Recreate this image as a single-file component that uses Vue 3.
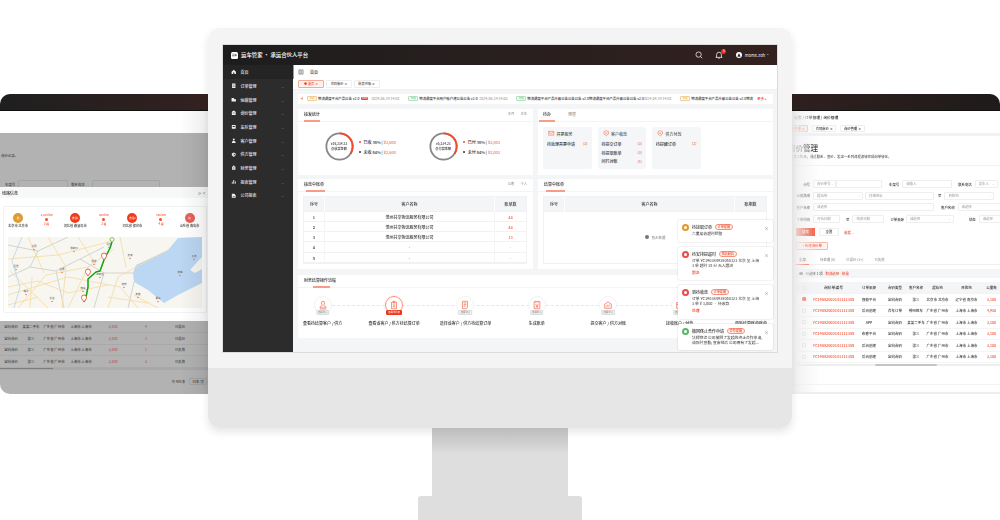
<script setup>
const menu = [
  { t: '首页', d: 'M1 5 5 1.5 9 5V9H6V6.500H4V9H1Z', on: true },
  { t: '订单管理', d: 'M2 1H8V9H2ZM3.500 3V4H6.500V3ZM3.500 5.500V6.500H6.500V5.500Z' },
  { t: '运输管理', d: 'M1 2H5L6.500 4H9V8H1Z' },
  { t: '询价管理', d: 'M1.500 3 5 1 8.500 3V9H1.500ZM3 5V6H7V5Z' },
  { t: '车队管理', d: 'M1.500 2H8.500V8.500H1.500ZM3 3.500V5.500H7V3.500Z' },
  { t: '客户管理', d: 'M5 1A1.800 1.800 0 1 1 5 4.600 1.800 1.800 0 1 1 5 1ZM1.500 9C1.500 6.500 3 5.500 5 5.500S8.500 6.500 8.500 9Z' },
  { t: '供方管理', d: 'M5 1 8.500 2.500V6L5 9 1.500 6V2.500ZM5 3V7L7 5.500V3.500Z' },
  { t: '财务管理', d: 'M2 2.500H8V8.500H2ZM4 1H6V2.500H4ZM4 4.500V6.500H6V4.500Z' },
  { t: '报表管理', d: 'M1.500 8.500V5H3V8.500ZM4.200 8.500V2H5.800V8.500ZM7 8.500V4H8.500V8.500Z' },
  { t: '公司报表', d: 'M1.500 1.500H6L8.500 4V8.500H1.500ZM3 5.500V6.500H7V5.500Z' },
]
const tableRows = [
  { n: 1, c: '沧州共享物流服务有限公司', v: '44' },
  { n: 2, c: '沧州共享物流服务有限公司', v: '44' },
  { n: 3, c: '沧州共享物流服务有限公司', v: '13' },
  { n: 4, c: '-', v: '-' },
  { n: 5, c: '-', v: '-' },
]
const todos = [
  { t: '开票服务', rows: [['待处理开票申请', '(3)']] },
  { t: '客户收款', rows: [['待提交订单', '(3)'], ['待提现账单', '(3)'], ['间行对账', '(1)']] },
  { t: '供方付款', rows: [['待提醒订单', '(2)']] },
]
const steps = [
  { t: '查看待结算客户 / 供方', b: '结算中心', d: 'M6 1.500A2 2 0 0 1 8 3.500C8 5 7 5.500 7 6.500L9.500 8V9.500H2.500V8L5 6.500C5 5.500 4 5 4 3.500A2 2 0 0 1 6 1.500ZM2 10.800H10' },
  { t: '查看该客户 / 供方待结算订单', b: '结算单列表', active: true, d: 'M3 2.500H9V10.500H3ZM5 1.500H7V3.500H5ZM4.500 6H7.500M4.500 8H7.500' },
  { t: '选择该客户 / 供方待结算订单', b: '结算中心', d: 'M3 1.500H9V9L7.500 10.500H3ZM4.500 3.500H7.500M4.500 5.500H7.500M4.500 7.500H6.500' },
  { t: '生成账单', b: '结算中心', d: 'M2.500 2H9.500V10.500H2.500ZM4.500 1V3M7.500 1V3M4.500 5 6 7 7.500 5M6 7V9.500M4.500 7.500H7.500' },
  { t: '提交客户 / 供方对账', b: '结算中心', d: 'M2 10V5L6 2 10 5V10ZM4 8.500 5.500 6.500 6.500 7.500 8 5.500' },
  { t: '接收账户 / 付款', b: '结算中心', d: 'M2 3H10V10H2ZM2 5.500H10M7 7.500H8.500' },
  { t: '更新结算账单账单', b: '', d: 'M3 1.500H9V10.500H3ZM4.500 4H7.500M4.500 6H7.500' },
]
const notices = [
  { t: '待接取订单', tag: '订单提醒', c: '#e5962a', s: '六里接收超时预警', h: 22, m: 0 },
  { t: '待安排提超时', tag: '预约履约', c: '#ee4a4a', s: '订单 YC190384938050123 北京 至 上海\n3 单 超时 15 分 无人跟进', a: '跟进', h: 33, m: 5 },
  { t: '到待收款', tag: '订单提醒', c: '#ee4a4a', s: '订单 YC190384938050123 北京 至 上海\n3 单 ¥ 3,000 · 待收款', a: '处理', h: 34, m: 5 },
  { t: '撤回终止合作申请', tag: '合作提醒', c: '#58b868', s: '法师物流 公司撤回了发起的终止合作申请,\n请及时查看; 查审批后 公司拥有了发起...', h: 26, m: 5 },
]
const stops = [
  { c: '#e09a33', i: '起', t: '北京市 北京市' },
  { km: '1,200 km', d: '2 程' },
  { c: '#f03b1c', i: '途经1', t: '河北省 秦皇岛市' },
  { km: '800 km', d: '2 程' },
  { c: '#f03b1c', i: '途经2', t: '河北省 保定市' },
  { km: '500 km', d: '4 程' },
  { c: '#e8605a', i: '终', t: '山东省 青岛市' },
]
const leftRows = [
  ['定向询价', '某某二手车', '广东省 广州市', '上海市 上海市', '3,100', '4', '已报价'],
  ['定向询价', '张三', '广东省 广州市', '上海市 上海市', '3,100', '2', '已报价'],
  ['定向询价', '张三', '广东省 广州市', '上海市 上海市', '3,100', '1', '已失效'],
  ['定向询价', '张三', '广东省 广州市', '上海市 上海市', '3,100', '3', '已失效'],
]
const rightRows = [
  ['智能平台', '定向询价', '张三', '北京市 北京市', '辽宁省 南京市', '3,100', true],
  ['后台创建', '合车订单', '神州租车', '广东省 广州市', '上海市 上海市', '4,950'],
  ['APP', '定向询价', '某某二手车', '广东省 广州市', '上海市 上海市', '3,100'],
  ['布客平台', '定向询价', '张三', '广东省 广州市', '上海市 上海市', '3,100'],
  ['后台创建', '定向询价', '张三', '广东省 广州市', '上海市 上海市', '3,100'],
  ['后台创建', '定向询价', '张三', '广东省 广州市', '上海市 上海市', '3,100'],
]
const cities = [
  [101, 8, '北京'], [122, 19, '天津'], [86, 25, '保定'], [54, 33, '太原'], [92, 38, '石家庄'],
  [75, 52, '邢台'], [116, 48, '济南'], [150, 62, '青岛'], [26, 10, '大同'], [172, 36, '渤海'],
  [18, 55, '临汾'], [130, 58, '泰安'], [186, 20, '大连'], [44, 62, '长治'], [66, 12, '张家口'], [8, 30, '吕梁'],
]
const pins = [[96, 23], [80, 39], [76, 65]]
</script>

<template>
  <div class="page">
    <section class="win win-left">
      <div class="win-head"></div>
      <div class="win-white"></div>
      <div class="mask">
        <p class="mask-note">询价记录。</p>
        <div class="mask-form"><span>车架号</span><i class="mask-in"></i><span>联系电话</span><i class="mask-in wide"></i></div>
        <div class="modal">
          <div class="modal-head"><span>线路信息</span><span class="modal-tools">⟳ ×</span></div>
          <div class="modal-card">
            <div class="stops">
              <template v-for="(s, i) in stops" :key="i">
                <div v-if="s.km" class="leg">
                  <span>{{ s.km }}</span><i></i><span>{{ s.d }}</span>
                </div>
                <div v-else class="stop">
                  <b :style="{ background: s.c }">{{ s.i }}</b>
                  <span>{{ s.t }}</span>
                </div>
              </template>
            </div>
            <svg class="map" viewBox="0 0 194 71" preserveAspectRatio="none">
              <rect width="194" height="71" fill="#f8f6f0" />
              <path d="M125 36 128 28 143 21 160 13 170 1 194 0V46L180 53 170 58 156 66 140 53 126 45Z" fill="#bcd7f3" />
              <path d="M182 33 194 20V32L187 36Z" fill="#f8f6f0" />
              <path d="M0 8 30 14 60 0M0 40 22 30 48 34 72 22 96 10M30 14 22 30M48 34 56 71M72 22 96 36 125 36M96 36 86 71M120 71 126 45" fill="none" stroke="#c4c4bf" stroke-width=".7" />
              <path d="M0 22 50 18 104 4M10 71 38 38 80 30 106 12M60 71 80 30M100 71 110 40 160 13M130 71 112 50 60 40 0 58M2 34 40 71M150 71 126 58M20 0 36 36M0 50 30 44 60 56 100 48M40 0 58 30 54 71M70 0 88 28M112 0 118 30M100 60 140 66M0 68 30 60M22 71 24 40" fill="none" stroke="#f5dca0" stroke-width=".8" />
              <path d="M14 0 4 24 12 50 6 71" fill="none" stroke="#b8d4ee" stroke-width=".8" />
              <path d="M104 5 102 11 96 23 92 34 88 35 80 42 80 50 78 60 76 65" fill="none" stroke="#0da30d" stroke-width="1.500" stroke-linejoin="round" />
              <g v-for="c in cities" :key="c[2]">
                <circle :cx="c[0]" :cy="c[1] + 2.500" r=".7" fill="#e4634f" />
                <text :x="c[0]" :y="c[1]" class="city">{{ c[2] }}</text>
              </g>
              <path v-for="(p, i) in pins" :key="i" :d="`M${p[0]} ${p[1]}c-1.600-2.400-2.500-3.200-2.500-4.500a2.500 2.500 0 0 1 5 0c0 1.300-.9 2.100-2.500 4.500Z`" fill="#fff" stroke="#e8503f" stroke-width=".9" />
              <circle cx="104" cy="2.500" r="2" fill="#fff" stroke="#7cb342" stroke-width=".9" />
            </svg>
          </div>
        </div>
        <div class="left-rows">
          <div v-for="(r, i) in leftRows" :key="i" class="left-row">
            <span v-for="(c, j) in r" :key="j" :class="{ dim: j === 4 || j === 5 }">{{ c }}</span>
          </div>
        </div>
        <div class="left-scroll"><i></i></div>
        <div class="left-pager"><span>共 400 条</span><em>10条/页</em></div>
      </div>
    </section>

    <section class="win win-right">
      <div class="win-head"></div>
      <div class="crumb">首页 / 订单管理 / 询价管理</div>
      <div class="r-tags">
        <span class="r-tag on">询价管理 ×</span><span class="r-tag">合同审价 ×</span><span class="r-tag">询价管理 ×</span>
      </div>
      <h2 class="r-title">询价管理</h2>
      <p class="r-sub">理工作台，通过联系、查价、发送一系列流程流转完成询单转化。</p>
      <div class="r-form">
        <div class="f-row"><label>询号</label><i class="in sel w23">询价单号</i><i class="in w46"></i><label class="ml">车架号</label><i class="in w50">请输入</i><label class="ml2">联系电话</label><i class="in sel w23">发车人</i></div>
        <div class="f-row"><label>运输路线</label><i class="in sel w50">起始地</i><i class="in w69">详细地址</i><label class="sm">至</label><i class="in sel w50">目的地</i></div>
        <div class="f-row"><label>客户名称</label><i class="in w121">请选择</i><label class="ml">客户名称</label><i class="in w50">请选择</i></div>
        <div class="f-row"><label>下单时间</label><i class="in w27">开始日期</i><label class="sm2">至</label><i class="in w32">结束日期</i><label class="ml3">订单来源</label><i class="in sel w48">请选择</i><label class="ml4">状态</label><i class="in w27">请选择</i></div>
      </div>
      <div class="r-btns"><b>搜索</b><span>重置</span><em>收起 ⌄</em></div>
      <div class="r-new">+ 新建询价单</div>
      <div class="r-tabs"><span class="on">全部</span><span>待处理 (6)</span><span>已报价 (3+)</span><span>已失效</span></div>
      <div class="r-alert"><i></i><span>已选择 1 项</span><em>取消选择</em><em>批量</em></div>
      <div class="r-table">
        <div class="r-tr th"><span class="ck"><i></i></span><span class="no">询价单编号</span><span>订单来源</span><span>询价类型</span><span>客户名称</span><span>起始地</span><span>目的地</span><span>公里数</span></div>
        <div v-for="(r, i) in rightRows" :key="i" class="r-tr">
          <span class="ck"><i :class="{ checked: r[6] }"></i></span>
          <span class="no red">YC19042000141112345</span>
          <span>{{ r[0] }}</span><span>{{ r[1] }}</span><span>{{ r[2] }}</span><span>{{ r[3] }}</span><span>{{ r[4] }}</span><span class="red">{{ r[5] }}</span>
        </div>
      </div>
      <div class="r-scroll"><i></i></div>
      <div class="r-foot"></div>
    </section>

    <div class="desk">
      <div class="monitor">
        <div class="bezel">
          <div class="screen">
            <header class="top">
              <span class="logo">运车</span>
              <h1>运车管家 · 承运合伙人平台</h1>
              <div class="top-right">
                <svg class="top-ic" viewBox="0 0 10 10"><circle cx="4.500" cy="4.500" r="3.300" /><path d="M7 7 9 9" /></svg>
                <span class="bell">
                  <svg class="top-ic" viewBox="0 0 10 10"><path d="M2 7.500V4.500A3 3 0 0 1 8 4.500V7.500L9 8H1ZM4 9H6" /></svg>
                  <b>5</b>
                </span>
                <span class="avatar"><svg viewBox="0 0 10 10"><circle cx="5" cy="5" r="5" fill="#fff" /><path d="M2.500 8C3 5.500 4 3 5 2.500 6 3 7 5.500 7.500 8Z" fill="#333" /></svg></span>
                <span class="user">mome.zoh ⌃</span>
              </div>
            </header>
            <div class="body">
              <aside class="side">
                <div v-for="m in menu" :key="m.t" class="menu" :class="{ on: m.on }">
                  <svg viewBox="0 0 10 10"><path :d="m.d" fill="#eee" fill-rule="evenodd" /></svg>
                  <span>{{ m.t }}</span>
                  <em v-if="!m.on">⌄</em>
                </div>
              </aside>
              <main class="main">
                <div class="nav">
                  <svg viewBox="0 0 10 10"><path d="M1.500 1.500H8.500V8.500H1.500ZM3.500 1.500V8.500M5 3.500H7M5 5H7M5 6.500H7" fill="none" stroke="#444" stroke-width=".8" /></svg>
                  <span>首页</span>
                </div>
                <div class="tabs">
                  <span class="tag on">● 首页 ×</span><span class="tag">合同审价 ×</span><span class="tag">财务对账 ×</span>
                </div>
                <div class="content">
                  <div class="ticker">
                    <svg viewBox="0 0 10 10"><path d="M1 4H3L6 2V8L3 6H1Z" fill="#f09a8c" /></svg>
                    <em class="pill y">平台</em><span class="s1">物流调度平台产品公告 v2.0</span><b>NEW</b><time>2024-06-14 14:01</time>
                    <em class="pill g">平台</em><span class="s2">物流调度平台用户账户建公告公告 v2.0</span><time>2024-06-14 14:03</time>
                    <em class="pill g">平台</em><span class="s3">物流调度平台产品升级公告公告公告 v2.0物流调度平台产品升级公告公告 v2.0</span><time>2024-04-14 14:01</time>
                    <em class="pill y">平台</em><span class="s4">物流调度平台产品升级公告公告 v2.0物流</span><a>更多 ▸</a>
                  </div>
                  <div class="two r1">
                    <section class="card">
                      <div class="card-head"><span class="ttl">核发统计</span><div class="ops"><span>本月</span><span>本年</span></div></div>
                      <div class="donuts">
                        <div class="donut-item">
                          <div class="donut">
                            <svg viewBox="0 0 32 32"><circle cx="16" cy="16" r="14.500" fill="none" stroke="#888" stroke-width="2" /><circle cx="16" cy="16" r="14.500" fill="none" stroke="#f4492a" stroke-width="2" stroke-dasharray="31 91" transform="rotate(-90 16 16)" /></svg>
                            <div class="donut-t"><span>¥16,234.23</span><span>总收款金额</span></div>
                          </div>
                          <ul class="legend"><li><i class="r"></i>已收 36% | <b>¥2,600</b></li><li><i></i>未收 64% | <b>¥2,600</b></li></ul>
                        </div>
                        <div class="donut-item">
                          <div class="donut">
                            <svg viewBox="0 0 32 32"><circle cx="16" cy="16" r="14.500" fill="none" stroke="#888" stroke-width="2" /><circle cx="16" cy="16" r="14.500" fill="none" stroke="#f4492a" stroke-width="2" stroke-dasharray="31 91" transform="rotate(-90 16 16)" /></svg>
                            <div class="donut-t"><span>¥5,234.23</span><span>总付款金额</span></div>
                          </div>
                          <ul class="legend"><li><i class="r"></i>已付 36% | <b>¥2,001</b></li><li><i></i>未付 64% | <b>¥2,001</b></li></ul>
                        </div>
                      </div>
                    </section>
                    <section class="card">
                      <div class="card-head"><span class="ttl t2">待办</span><span class="tab2">预警</span></div>
                      <div class="todo-row">
                        <div v-for="(b, bi) in todos" :key="b.t" class="todo">
                          <div class="todo-t">
                            <svg viewBox="0 0 10 10"><path v-if="bi === 0" d="M1 2H9V8H1ZM1 2.500 5 5.500 9 2.500" /><path v-else d="M5 1 8.500 2.500V6L5 9 1.500 6V2.500ZM3.500 5H6.500" /></svg>
                            <span>{{ b.t }}</span>
                          </div>
                          <div v-for="r in b.rows" :key="r[0]" class="todo-r"><span>{{ r[0] }}</span><em>{{ r[1] }}</em></div>
                        </div>
                      </div>
                    </section>
                  </div>
                  <div class="two r2">
                    <section class="card">
                      <div class="card-head"><span class="ttl t3">核款中账单</span><div class="ops"><span>公客</span><span>个人</span></div></div>
                      <div class="tbl">
                        <div class="tr th"><span>序号</span><span>客户名称</span><span>账单数</span></div>
                        <div v-for="r in tableRows" :key="r.n" class="tr"><span>{{ r.n }}</span><span>{{ r.c }}</span><span class="red">{{ r.v }}</span></div>
                      </div>
                    </section>
                    <section class="card">
                      <div class="card-head"><span class="ttl t3">结算中账单</span></div>
                      <div class="tbl">
                        <div class="tr th"><span>序号</span><span>客户名称</span><span>账期数</span></div>
                        <div class="empty"><i></i>暂无数据</div>
                      </div>
                    </section>
                  </div>
                  <section class="card r3">
                    <div class="card-head"><span class="ttl t4">财务结算操作流程</span></div>
                    <div class="flow">
                      <div v-for="(s, i) in steps" :key="i" class="step" :class="{ active: s.active }">
                        <div class="circle">
                          <svg viewBox="0 0 12 12"><path :d="s.d" /></svg>
                          <b v-if="s.b">{{ s.b }}</b>
                        </div>
                        <span>{{ s.t }}</span>
                      </div>
                    </div>
                  </section>
                </div>
              </main>
            </div>
            <div class="toasts">
              <div v-for="n in notices" :key="n.t" class="toast" :style="{ height: n.h + 'px', marginTop: n.m + 'px' }">
                <i class="dot" :style="{ borderColor: n.c }"></i>
                <div class="toast-b">
                  <div class="toast-t"><strong>{{ n.t }}</strong><em>{{ n.tag }}</em><u>×</u></div>
                  <p>{{ n.s }}</p>
                  <a v-if="n.a">{{ n.a }}</a>
                </div>
              </div>
            </div>
          </div>
        </div>
        <div class="chin"></div>
      </div>
      <div class="neck"></div>
      <div class="base"></div>
    </div>
  </div>
</template>

<style>
html, body { margin: 0; background: #fff; }
</style>

<style scoped>
* { box-sizing: border-box; }
.page { position: relative; width: 1000px; height: 520px; overflow: hidden; background: #fff; font-family: "Noto Sans CJK SC", "Liberation Sans", sans-serif; font-size: 4px; font-weight: 500; color: #333; }
i, em, u { font-style: normal; text-decoration: none; }
p, h1, h2, ul { margin: 0; padding: 0; list-style: none; }
.red { color: #f4694e; }

/* stacked windows */
.win { position: absolute; top: 94px; width: 208px; height: 300px; background: #fff; overflow: hidden; filter: blur(.25px); }
.win-left { left: 0; border-radius: 10px 0 0 10px; }
.win-right { left: 792px; border-radius: 0 10px 0 0; }
.win-left::after { content: ""; position: absolute; inset: 17px 0 0 180px; background: linear-gradient(90deg, rgba(0,0,0,0), rgba(0,0,0,.07)); pointer-events: none; z-index: 2; }
.win-right::after { content: ""; position: absolute; inset: 17px 180px 0 0; background: linear-gradient(90deg, rgba(238,238,238,.95), rgba(246,246,246,0)); pointer-events: none; }
.win-head { height: 17px; background: linear-gradient(90deg, #1f1f1f, #33211f); border-bottom: 1px solid #111; }
.win-right .win-head { background: linear-gradient(90deg, #2f201e, #1e1b1a); }
.win-white { height: 22px; }
.mask { position: relative; height: 261px; background: #b2b2b2; color: #444; font-size: 3.400px; }
.mask-note { padding: 21px 0 0 1px; line-height: 4px; }
.mask-form { display: flex; align-items: center; gap: 3px; height: 8px; margin-top: 22px; padding: 0 0 0 5px; }
.mask-in { width: 50px; height: 8px; border: 1px solid #a4a4a4; border-radius: 1px; }
.mask-in.wide { width: 68px; margin-left: 4px; }
.modal { position: absolute; left: 0; right: 0; top: 54px; height: 134px; background: #fff; color: #333; z-index: 1; }
.modal-head { display: flex; justify-content: space-between; align-items: center; height: 11px; padding: 0 2px; background: #f7f8f8; font-size: 4px; }
.modal-tools { color: #888; }
.modal-card { margin: 8px 1px 0 3px; padding: 3px 4px; height: 107px; border: 1px solid #f2f3f4; border-radius: 2px; }
.stops { display: grid; grid-template-columns: repeat(7, 28.600px); margin: 0 -4.300px; height: 27px; padding-top: 3px; justify-items: center; }
.stop { display: flex; flex-direction: column; align-items: center; gap: 1px; font-size: 3.200px; line-height: 4px; white-space: nowrap; }
.stop b { display: flex; align-items: center; justify-content: center; width: 10px; height: 10px; border-radius: 50%; color: #fff; font-weight: 400; font-size: 2.600px; }
.leg { display: flex; flex-direction: column; align-items: center; gap: 1px; color: #f4492a; font-size: 2.800px; line-height: 4px; white-space: nowrap; }
.leg i { width: 3px; height: 3px; border-radius: 50%; background: #f4492a; }
.map { display: block; width: 100%; height: 71px; }
.city { font-size: 2.500px; fill: #666; text-anchor: middle; }
.left-rows { margin-top: 133.500px; }
.left-row { display: grid; grid-template-columns: 22px 18px 28px 26px 38px 28px 40px; justify-items: center; align-items: center; height: 11.500px; border-bottom: 1px solid #a9a9a9; font-size: 3.400px; white-space: nowrap; }
.left-row .dim { color: #b0564a; }
.left-scroll { height: 2px; margin-top: .5px; background: #a8a8a8; }
.left-scroll i { display: block; width: 53px; height: 1px; background: #7d7d7d; }
.left-pager { display: flex; justify-content: flex-end; gap: 4px; align-items: center; height: 7px; margin-top: 8px; padding-right: 1px; font-size: 3.300px; white-space: nowrap; }
.left-pager em { padding: 0 2px; border: 1px solid #a4a4a4; border-radius: 1px; }

.crumb { height: 11px; padding: 4px 0 0 2px; color: #333; font-size: 3.800px; line-height: 5px; white-space: nowrap; }
.r-tags { display: flex; gap: 4px; height: 13px; margin-top: 1px; padding: 1.500px 0 0; border-bottom: 3px solid #f0f2f5; }
.r-tag { height: 7px; padding: 0 2.500px; border: 1px solid #eee; border-radius: 1px; font-size: 3.300px; line-height: 5px; white-space: nowrap; }
.r-tag.on { margin-left: -8px; color: #f4492a; border-color: #f8b7a7; background: #fff1ed; }
.r-title { margin: 6px 0 0 -4px; height: 11px; font-weight: 500; font-size: 7.500px; line-height: 11px; white-space: nowrap; color: #222; }
.r-sub { margin-top: .5px; font-size: 3.400px; line-height: 5px; color: #555; white-space: nowrap; border-bottom: 1px solid #f3f3f3; padding: 0 0 6px 1px; }
.r-form { margin-top: 14.500px; display: flex; flex-direction: column; gap: 3.700px; }
.f-row { display: flex; align-items: center; height: 8px; font-size: 3.400px; white-space: nowrap; }
.f-row label { width: 21px; padding-right: 3px; text-align: right; color: #333; flex: none; }
.f-row label.ml, .f-row label.ml2, .f-row label.ml3, .f-row label.ml4, .f-row label.sm, .f-row label.sm2 { width: auto; padding: 0; }
.f-row label.ml { margin: 0 3px 0 5px; }
.f-row label.ml2 { margin: 0 3px 0 4px; }
.f-row label.ml3 { margin: 0 2px 0 4px; }
.f-row label.ml4 { margin: 0 3px 0 13px; }
.f-row label.sm { margin: 0 3px 0 2px; }
.f-row label.sm2 { margin: 0 3px 0 4px; }
.in { position: relative; display: block; flex: none; height: 8px; padding-left: 3px; border: 1px solid #eee; border-radius: 1px; color: #aaa; line-height: 6px; margin-right: 2px; }
.in.sel::after { content: "⌄"; position: absolute; right: 1.500px; top: -.5px; color: #bbb; }
.w23 { width: 23px; margin-right: 0; } .w27 { width: 27px; } .w32 { width: 32px; } .w46 { width: 46px; } .w48 { width: 48px; } .w50 { width: 50px; } .w69 { width: 69px; } .w121 { width: 121px; }
.r-btns { display: flex; align-items: center; gap: 4px; margin: 5px 0 0 4px; height: 8px; font-size: 3.400px; }
.r-btns b { width: 19px; line-height: 8px; text-align: center; color: #fff; background: #f4492a; font-weight: 400; }
.r-btns span { width: 20px; line-height: 6px; text-align: center; border: 1px solid #eee; border-radius: 1px; }
.r-btns em { margin-left: 1px; color: #f4492a; }
.r-new { width: 32px; margin: 6px 0 0 4px; height: 8px; line-height: 6px; text-align: center; color: #f4492a; background: #fff5f2; border: 1px solid #f8b7a7; border-radius: 1px; font-size: 3.400px; white-space: nowrap; }
.r-tabs { display: flex; gap: 11px; margin-top: 5px; padding-left: 4px; height: 10px; border-bottom: 1px solid #f0f0f0; font-size: 3.400px; color: #999; line-height: 9px; white-space: nowrap; }
.r-tabs .on { width: 13px; height: 10px; text-align: center; color: #333; border-bottom: 1px solid #f4492a; }
.r-alert { display: flex; align-items: center; gap: 3px; margin: 4px 0 0 4px; padding-left: 3px; height: 9px; background: #f4f5f7; font-size: 3.400px; color: #666; white-space: nowrap; }
.r-alert i { width: 3.500px; height: 3.500px; border-radius: 50%; background: #666; }
.r-alert em { color: #f4492a; }
.r-table { margin: 4px 0 0 4px; width: 204px; }
.r-tr { display: grid; grid-template-columns: 16px 43px 28px 24px 18px 25px 33px 17px; height: 11.500px; align-items: center; justify-items: center; border-bottom: 1px solid #f4f4f4; font-size: 3.500px; white-space: nowrap; color: #333; }
.r-tr .red { color: #f4492a; }
.r-tr .no { font-size: 3.800px; }
.r-tr.th { height: 12px; background: #f4f5f7; }
.ck i { display: block; width: 4px; height: 4px; border: .5px solid #ddd; border-radius: 1px; background: #fff; }
.ck i.checked { background: #f4321a; border-color: #f4321a; }
.r-scroll { height: 2px; margin: 1px 0 0 4px; background: #eee; }
.r-scroll i { display: block; width: 62px; height: 2px; margin-left: 79px; background: #c4c4c4; border-radius: 1px; }
.r-foot { height: 10px; margin-top: 18px; border-top: 1px solid #f3f3f3; border-bottom: 2px solid #eee; }

/* monitor */
.desk { position: relative; display: flex; flex-direction: column; align-items: center; padding-top: 28px; }
.monitor { width: 584px; height: 400px; border-radius: 12px; overflow: hidden; box-shadow: 0 4px 9px rgba(0,0,0,.1); }
.bezel { height: 340px; padding: 17px 15px 0; background: #f4f4f4; }
.chin { height: 60px; background: #e6e6e6; }
.neck { width: 136px; height: 68px; background: linear-gradient(#bcbcbc, #dedede 26px); }
.base { width: 164px; height: 24px; background: #dedede; border-radius: 3px 3px 0 0; }
.screen { position: relative; display: flex; flex-direction: column; width: 554px; height: 307px; background: #f4f5f7; outline: 1.500px solid #dcdcdc; filter: blur(.25px); }

.top { display: flex; align-items: center; flex: none; height: 20px; padding: 0 8px; color: #fff; background: linear-gradient(90deg, #1d1d1d, #33211f); }
.logo { width: 7px; height: 7px; border-radius: 1.500px; background: #fff; color: #222; font-size: 2.400px; line-height: 7px; text-align: center; font-weight: 700; overflow: hidden; white-space: nowrap; }
.top h1 { margin-left: 3px; font-size: 5.400px; font-weight: 500; white-space: nowrap; }
.top-right { display: flex; align-items: center; margin-left: auto; }
.top-ic { display: block; width: 8px; height: 8px; fill: none; stroke: #fff; stroke-width: .9; }
.bell { position: relative; margin-left: 12px; }
.bell b { position: absolute; top: -2px; right: -3px; width: 5px; height: 5px; border-radius: 50%; background: #ee2b25; font-size: 3px; font-weight: 400; line-height: 5px; text-align: center; }
.avatar { width: 6px; height: 6px; margin: 0 2.500px 0 13px; }
.avatar svg { display: block; }
.user { font-size: 4px; color: #ddd; white-space: nowrap; }

.body { display: flex; flex: 1; min-height: 0; }
.side { flex: none; width: 70px; background: #2c2c2c; color: #e8e8e8; }
.menu { display: flex; align-items: center; height: 13.700px; padding: 0 9px 0 8px; font-size: 4px; white-space: nowrap; }
.menu.on { background: #242424; height: 14px; }
.menu svg { flex: none; width: 5.500px; height: 5.500px; margin-right: 4px; }
.menu em { margin-left: auto; color: #777; font-size: 4px; }

.main { flex: 1; min-width: 0; }
.nav { display: flex; align-items: center; height: 14px; padding-left: 4px; background: #fff; border-left: 1px solid #f4785f; font-size: 4px; color: #333; }
.nav svg { width: 6px; height: 6px; margin-right: 6px; }
.tabs { display: flex; gap: 2px; align-items: center; height: 11px; padding-left: 5px; background: #fff; border-bottom: 1px solid #f0f1f3; }
.tag { height: 7.500px; padding: 0 3.500px; border: 1px solid #eee; border-radius: 1px; font-size: 3.200px; line-height: 5.500px; white-space: nowrap; color: #444; }
.tag.on { padding: 0 5px; color: #f4492a; background: #fff1ed; border-color: #f8a995; }
.content { display: flex; flex-direction: column; padding: 3.500px 4px 0 5px; }
.ticker { display: flex; align-items: center; height: 10px; padding: 0 2px; background: #fff; font-size: 3.400px; white-space: nowrap; overflow: hidden; color: #333; }
.ticker svg { flex: none; width: 5px; height: 5px; margin-right: 2px; }
.ticker > span { flex: none; margin-left: 1px; }
.s1 { width: 41px; } .s2 { width: 57px; } .s3 { width: 113px; } .s4 { width: 63px; }
.ticker b { flex: none; margin-left: 2px; padding: 0 1px; border-radius: 1px; background: #e8443a; color: #fff; font-weight: 400; font-size: 2.400px; line-height: 3.500px; }
.ticker time { flex: none; width: 29px; margin: 0 8px 0 3px; color: #999; font-size: 3.500px; }
.ticker a { margin-left: 3px; color: #f4492a; }
.pill { flex: none; border: .5px solid; border-radius: 1px; font-size: 2.600px; line-height: 3.800px; width: 10px; text-align: center; }
.pill.y { color: #e8ad55; border-color: #efcf9b; background: #fff9ee; }
.pill.g { color: #71c283; border-color: #b4e0bd; background: #f2fbf4; }

.two { display: grid; grid-template-columns: 235px 235px; gap: 5px; }
.r1 { height: 66.500px; margin-top: 5px; }
.r2 { height: 90px; margin-top: 3.500px; }
.r3 { height: 63px; margin-top: 6px; }
.card { background: #fff; min-width: 0; }
.card-head { display: flex; align-items: flex-end; height: 13px; padding: 0 6px; border-bottom: 1px solid #f3f4f6; font-size: 4px; color: #333; }
.ttl { position: relative; height: 13px; line-height: 12px; font-size: 4px; white-space: nowrap; }
.ttl::after { content: ""; position: absolute; left: 0; right: 0; bottom: -1px; height: 1.500px; background: #f89c88; }
.t2 { width: 16px; text-align: center; margin-left: -5px; }
.tab2 { margin-left: 13px; height: 13px; line-height: 12px; color: #999; }
.t3::after { left: 2px; right: -1px; }
.t4::after { left: 9px; right: 6px; }
.ops { display: flex; gap: 6px; margin-left: auto; height: 13px; line-height: 12px; font-size: 3.300px; color: #999; }
.donuts { display: flex; padding: 10.500px 0 0 26.500px; }
.donut-item { display: flex; align-items: center; width: 108px; }
.donut { position: relative; flex: none; width: 29px; height: 29px; }
.donut svg { display: block; }
.donut-t { position: absolute; inset: 0; display: flex; flex-direction: column; align-items: center; justify-content: center; font-size: 3.200px; line-height: 4.500px; color: #333; white-space: nowrap; }
.legend { margin-left: 5.500px; font-size: 4px; white-space: nowrap; }
.legend li { display: flex; align-items: center; height: 10px; }
.legend i { width: 2px; height: 2px; margin-right: 2.500px; border-radius: 50%; background: #333; }
.legend i.r { background: #f4492a; }
.legend b { margin-left: 1px; color: #f4492a; font-weight: 400; }
.todo-row { display: flex; gap: 6px; padding: 5px 0 0 5px; }
.todo { width: 48.500px; height: 42px; padding: 4px; background: #f4f6f8; border-radius: 2px; font-size: 4px; }
.todo-t { display: flex; align-items: center; height: 6px; margin-bottom: 3px; color: #555; }
.todo-t svg { width: 6.500px; height: 6.500px; margin: 0 2px 0 1px; fill: #fde9e4; stroke: #f4694e; stroke-width: .8; }
.todo-r { display: flex; justify-content: space-between; align-items: center; height: 8.700px; color: #333; white-space: nowrap; }
.todo-r em { color: #f4694e; font-size: 3.500px; }
.tbl { margin: 4px 6px 0 5px; border: .5px solid #f1f2f4; }
.tr { display: grid; grid-template-columns: 20px 1fr 31px; align-items: center; justify-items: center; height: 10.300px; border-bottom: 1px solid #f1f2f4; font-size: 4px; white-space: nowrap; }
.tr span:nth-child(2) { width: 100%; text-align: center; border-left: 1px solid #f5f5f5; border-right: 1px solid #f5f5f5; line-height: 10px; }
.tr.th { height: 15px; background: #f4f5f7; font-size: 4px; }
.tr.th span:nth-child(2) { border-color: #fff; line-height: 15px; }
.empty { display: flex; align-items: center; justify-content: center; gap: 3px; height: 51px; color: #999; font-size: 3.400px; }
.empty i { width: 4px; height: 4px; border-radius: 50%; background: #777; }
.flow { position: relative; display: grid; grid-template-columns: repeat(7, 71.400px); margin-left: -11px; }
.flow::before { content: ""; position: absolute; left: 40px; right: 20px; top: 17.500px; border-top: .5px dashed #e6e6e6; }
.step { position: relative; display: flex; flex-direction: column; align-items: center; padding-top: 8.500px; font-size: 4px; color: #333; white-space: nowrap; }
.circle { position: relative; display: flex; align-items: center; justify-content: center; width: 18px; height: 18px; margin-bottom: 6px; border: .5px solid #f2f2f2; border-radius: 50%; background: #fff; }
.circle svg { width: 10px; height: 10px; fill: #fff2ee; stroke: #f4694e; stroke-width: .8; }
.circle b { position: absolute; bottom: -2px; left: 50%; transform: translateX(-50%); padding: 0 1px; border-radius: 1px; background: #f1f1f1; color: #888; font-weight: 400; font-size: 2.400px; line-height: 3.200px; border: .5px solid #ddd; white-space: nowrap; }
.step.active .circle { border: .8px solid #f6937e; box-shadow: 0 0 0 .5px #fff, 0 0 2px #fbb; }
.step.active .circle b { background: #e9351c; color: #fff; border-color: #e9351c; }

/* notifications overlay */
.toasts { position: absolute; top: 175px; left: 455px; width: 95px; }
.toast { display: flex; padding: 3px 4px 0 3.500px; background: #fff; border-radius: 2px; box-shadow: 0 0 2px rgba(0,0,0,.2); overflow: hidden; }
.dot { flex: none; width: 7px; height: 7px; margin: .5px 3.500px 0 0; border: 2px solid; border-radius: 50%; }
.toast-b { flex: 1; min-width: 0; }
.toast-t { display: flex; align-items: center; height: 8px; }
.toast-t strong { font-size: 4px; font-weight: 500; color: #333; white-space: nowrap; }
.toast-t em { margin-left: 2.500px; padding: 0 2px; border: .5px solid #f6917c; border-radius: 3px; background: #fff4f1; color: #f4492a; font-size: 3.200px; line-height: 4px; white-space: nowrap; }
.toast-t u { margin-left: auto; color: #aaa; font-size: 5px; }
.toast-b p { font-size: 3.800px; line-height: 5.300px; color: #555; white-space: pre; }
.toast-b a { display: block; font-size: 3.800px; line-height: 7px; color: #f4492a; }
</style>
